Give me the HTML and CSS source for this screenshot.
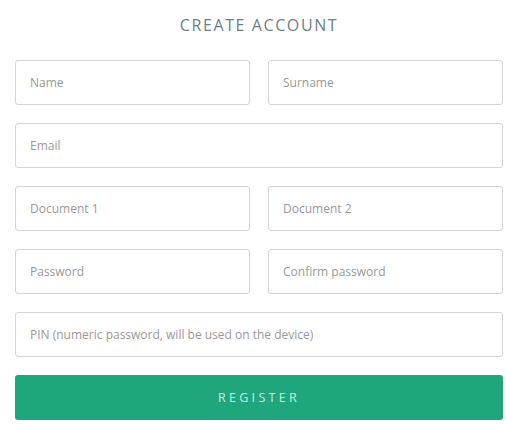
FILE: index.html
```html
<!DOCTYPE html>
<html>
<head>
<meta charset="utf-8">
<link rel="stylesheet" href="styles.css">
</head>
<body>
<div class="page">
  <h1 class="title">CREATE ACCOUNT</h1>
  <form class="form">
    <div class="row">
      <input class="field" placeholder="Name">
      <input class="field" placeholder="Surname">
    </div>
    <div class="row">
      <input class="field" placeholder="Email">
    </div>
    <div class="row">
      <input class="field" placeholder="Document 1">
      <input class="field" placeholder="Document 2">
    </div>
    <div class="row">
      <input class="field" placeholder="Password">
      <input class="field" placeholder="Confirm password">
    </div>
    <div class="row">
      <input class="field" placeholder="PIN (numeric password, will be used on the device)">
    </div>
    <button type="button" class="register">REGISTER</button>
  </form>
</div>
</body>
</html>
```

FILE: styles.css
```css
* { box-sizing: border-box; }
html, body { margin: 0; padding: 0; background: #fff; }
body { font-family: "Open Sans", "Noto Sans", sans-serif; }
.page {
  padding: 0 3px 0 15px;
}
.title {
  margin: 0;
  padding-top: 15px;
  height: 60px;
  text-align: center;
  font-size: 16px;
  font-weight: 400;
  letter-spacing: 1.6px;
  color: #6c7f87;
  line-height: 20px;
}
.form {
  display: flex;
  flex-direction: column;
  gap: 18px;
}
.row {
  display: flex;
  gap: 18px;
}
.field {
  flex: 1;
  min-width: 0;
  height: 45px;
  border: 1px solid #d4d4d4;
  border-radius: 3px;
  padding: 0 14px;
  font-family: inherit;
  font-size: 12px;
  color: #555;
  background: #fff;
  outline: none;
}
.field::placeholder { color: #999; }
.register {
  height: 45px;
  border: 0;
  border-radius: 3px;
  background: #1fa67c;
  color: #c8f0e0;
  font-family: inherit;
  font-size: 12.5px;
  letter-spacing: 3.3px;
  padding: 0;
}
```
